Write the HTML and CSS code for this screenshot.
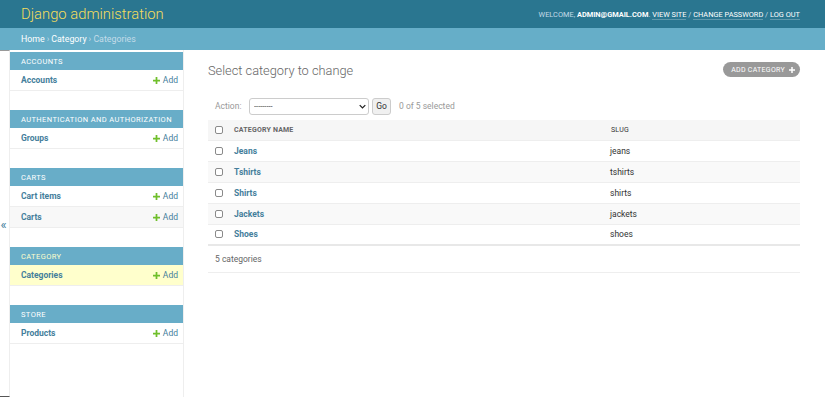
FILE: index.html
```html
<!DOCTYPE html>
<html lang="en">
<head>
<meta charset="utf-8">
<title>Select category to change | Django site admin</title>
<link rel="stylesheet" href="styles.css">
</head>
<body>
<header class="header">
  <div class="branding">Django administration</div>
  <div class="user-tools">WELCOME, <strong>ADMIN@GMAIL.COM</strong>. <a href="#">VIEW SITE</a> / <a href="#">CHANGE PASSWORD</a> / <a href="#">LOG OUT</a></div>
</header>
<div class="breadcrumbs"><a href="#">Home</a> › <a href="#">Category</a> › Categories</div>
<div class="main">
  <div class="toggle"><span>«</span></div>
  <nav class="sidebar">
    <div class="module">
      <div class="caption">ACCOUNTS</div>
      <div class="mrow"><a class="model" href="#">Accounts</a><a class="add" href="#"><svg viewBox="0 0 8 8" class="plus"><path d="M3 0h2v3h3v2H5v3H3V5H0V3h3z"/></svg>Add</a></div>
    </div>
    <div class="module">
      <div class="caption">AUTHENTICATION AND AUTHORIZATION</div>
      <div class="mrow"><a class="model" href="#">Groups</a><a class="add" href="#"><svg viewBox="0 0 8 8" class="plus"><path d="M3 0h2v3h3v2H5v3H3V5H0V3h3z"/></svg>Add</a></div>
    </div>
    <div class="module">
      <div class="caption">CARTS</div>
      <div class="mrow"><a class="model" href="#">Cart items</a><a class="add" href="#"><svg viewBox="0 0 8 8" class="plus"><path d="M3 0h2v3h3v2H5v3H3V5H0V3h3z"/></svg>Add</a></div>
      <div class="mrow alt"><a class="model" href="#">Carts</a><a class="add" href="#"><svg viewBox="0 0 8 8" class="plus"><path d="M3 0h2v3h3v2H5v3H3V5H0V3h3z"/></svg>Add</a></div>
    </div>
    <div class="module current">
      <div class="caption">CATEGORY</div>
      <div class="mrow selected"><a class="model" href="#">Categories</a><a class="add" href="#"><svg viewBox="0 0 8 8" class="plus"><path d="M3 0h2v3h3v2H5v3H3V5H0V3h3z"/></svg>Add</a></div>
    </div>
    <div class="module">
      <div class="caption">STORE</div>
      <div class="mrow"><a class="model" href="#">Products</a><a class="add" href="#"><svg viewBox="0 0 8 8" class="plus"><path d="M3 0h2v3h3v2H5v3H3V5H0V3h3z"/></svg>Add</a></div>
    </div>
  </nav>
  <div class="content">
    <div class="title-row">
      <h1>Select category to change</h1>
      <a class="addbtn" href="#">ADD CATEGORY <svg viewBox="0 0 8 8" class="wplus"><path d="M3 0h2v3h3v2H5v3H3V5H0V3h3z"/></svg></a>
    </div>
    <div class="actions">
      <label class="alabel">Action:</label>
      <span class="selectwrap">
        <select class="aselect"><option>---------</option></select>
        <svg class="chev" viewBox="0 0 10 6"><path d="M1 1l4 4 4-4" fill="none" stroke="#222" stroke-width="1.8"/></svg>
      </span>
      <button class="go">Go</button>
      <span class="counter">0 of 5 selected</span>
    </div>
    <table class="results">
      <thead>
        <tr><th class="cb"><input type="checkbox"></th><th class="name">CATEGORY NAME</th><th class="slug">SLUG</th></tr>
      </thead>
      <tbody>
        <tr><td class="cb"><input type="checkbox"></td><th class="name"><a href="#">Jeans</a></th><td class="slug">jeans</td></tr>
        <tr class="alt"><td class="cb"><input type="checkbox"></td><th class="name"><a href="#">Tshirts</a></th><td class="slug">tshirts</td></tr>
        <tr><td class="cb"><input type="checkbox"></td><th class="name"><a href="#">Shirts</a></th><td class="slug">shirts</td></tr>
        <tr class="alt"><td class="cb"><input type="checkbox"></td><th class="name"><a href="#">Jackets</a></th><td class="slug">jackets</td></tr>
        <tr><td class="cb"><input type="checkbox"></td><th class="name"><a href="#">Shoes</a></th><td class="slug">shoes</td></tr>
      </tbody>
    </table>
    <p class="paginator">5 categories</p>
  </div>
</div>
</body>
</html>
```
FILE: styles.css
```css
* { box-sizing: border-box; }
html, body { margin: 0; padding: 0; }
body {
  font-family: Roboto, "Liberation Sans", sans-serif;
  color: #333;
  background: #fff;
  height: 397px;
  overflow: hidden;
}
a { text-decoration: none; color: #447e9b; }

.header {
  height: 28px;
  background: #2a7690;
  display: flex;
  align-items: center;
  justify-content: space-between;
  padding: 0 25px 0 21px;
}
.branding {
  color: #f5dd5d;
  font-size: 14.8px;
  font-weight: 300;
}
.user-tools {
  color: #c4dce8;
  font-size: 7.4px;
}
.user-tools strong { color: #fff; font-weight: 700; }
.user-tools a {
  color: #fff;
  border-bottom: 1px solid rgba(255,255,255,0.25);
}

.breadcrumbs {
  height: 22px;
  background: #66aec8;
  color: #c4dce8;
  font-size: 8.8px;
  padding: 0 21px;
  display: flex;
  align-items: center;
  gap: 2px;
}
.breadcrumbs a { color: #fff; }

.main {
  display: flex;
  height: 347px;
}
.toggle {
  width: 10px;
  border-right: 1px solid #eee;
  border-top: 1px solid #999;
  border-bottom: 1px solid #555;
  display: flex;
  align-items: center;
  justify-content: center;
  color: #447e9b;
  font-size: 13px;
}
.toggle span { margin-top: 2px; margin-left: -2px; }
.sidebar {
  width: 174px;
  border-right: 1px solid #eee;
  padding-top: 2px;
}
.module { margin-bottom: 19px; }
.caption {
  height: 18px;
  background: #68adc8;
  color: #fff;
  font-size: 7.5px;
  letter-spacing: 0.4px;
  padding-left: 11px;
  display: flex;
  align-items: center;
}
.current .caption { color: #ffc; }
.mrow {
  height: 21px;
  display: flex;
  align-items: center;
  justify-content: space-between;
  padding: 0 5px 0 11px;
  border-bottom: 1px solid #eee;
  font-size: 8.5px;
}
.mrow.alt { background: #f8f8f8; }
.mrow.selected { background: #ffc; }
.model { font-weight: 700; }
.add { display: flex; align-items: center; gap: 3px; color: #447e9b; }
.plus { width: 7px; height: 7px; fill: #70bf2b; }

.content {
  flex: 1;
  padding: 0 25px 0 24px;
}
.title-row {
  display: flex;
  justify-content: space-between;
  align-items: flex-start;
  padding-top: 11px;
  height: 45px;
}
h1 {
  margin: 0;
  font-size: 12.8px;
  font-weight: 300;
  color: #666;
  line-height: 20px;
}
.addbtn {
  margin-top: 1px;
  height: 15px;
  background: #999;
  color: #fff;
  border-radius: 8px;
  font-size: 7px;
  letter-spacing: 0.3px;
  padding: 0 5px 0 8px;
  display: flex;
  align-items: center;
  gap: 4px;
}
.wplus { width: 6px; height: 6px; fill: #fff; }

.actions {
  display: flex;
  align-items: center;
  height: 20px;
  padding-left: 7px;
  font-size: 8.5px;
  color: #999;
  margin-top: 1px;
}
.alabel { width: 34px; }
.selectwrap { position: relative; display: flex; }
.aselect {
  appearance: none;
  -webkit-appearance: none;
  width: 120px;
  height: 17px;
  border: 1px solid #ccc;
  border-radius: 3px;
  background: #fff;
  font-family: Roboto, sans-serif;
  font-size: 7.5px;
  color: #333;
  padding: 0 4px;
}
.chev { position: absolute; right: 3px; top: 6px; width: 7px; height: 5px; }
.go {
  margin-left: 3px;
  height: 17px;
  width: 19px;
  padding: 0;
  border: 1px solid #ccc;
  border-radius: 3px;
  background: #f0f0f0;
  font-family: Roboto, sans-serif;
  font-size: 8.5px;
  color: #333;
}
.counter { margin-left: 8px; }

.results {
  width: 100%;
  border-collapse: collapse;
  margin-top: 4px;
  font-size: 8.5px;
}
.results thead th {
  background: #f6f6f6;
  height: 20px;
  font-size: 7px;
  font-weight: 700;
  color: #666;
  text-align: left;
  letter-spacing: 0.2px;
  border-bottom: 1px solid #eee;
}
.results td, .results tbody th {
  height: 21px;
  border-bottom: 1px solid #eee;
  text-align: left;
  padding: 0;
}
.results tbody tr:last-child td, .results tbody tr:last-child th { border-bottom: 2px solid #e8e8e8; }
.results tr.alt { background: #f9f9f9; }
.results .cb { width: 26px; padding-left: 7px; }
.results thead th.cb { padding-left: 7px; }
.results .name { width: 376px; padding-left: 0; }
.results tbody th a { font-weight: 700; }
.results .slug { color: #333; font-weight: 400; }
input[type="checkbox"] {
  appearance: none;
  -webkit-appearance: none;
  width: 8px;
  height: 8px;
  margin: 0;
  border: 1px solid #8a8a8a;
  border-radius: 2px;
  background: #fff;
  display: block;
}

.paginator {
  margin: 0;
  height: 27px;
  padding-left: 7px;
  display: flex;
  align-items: center;
  font-size: 8.5px;
  color: #666;
  border-bottom: 1px solid #eee;
}
```
